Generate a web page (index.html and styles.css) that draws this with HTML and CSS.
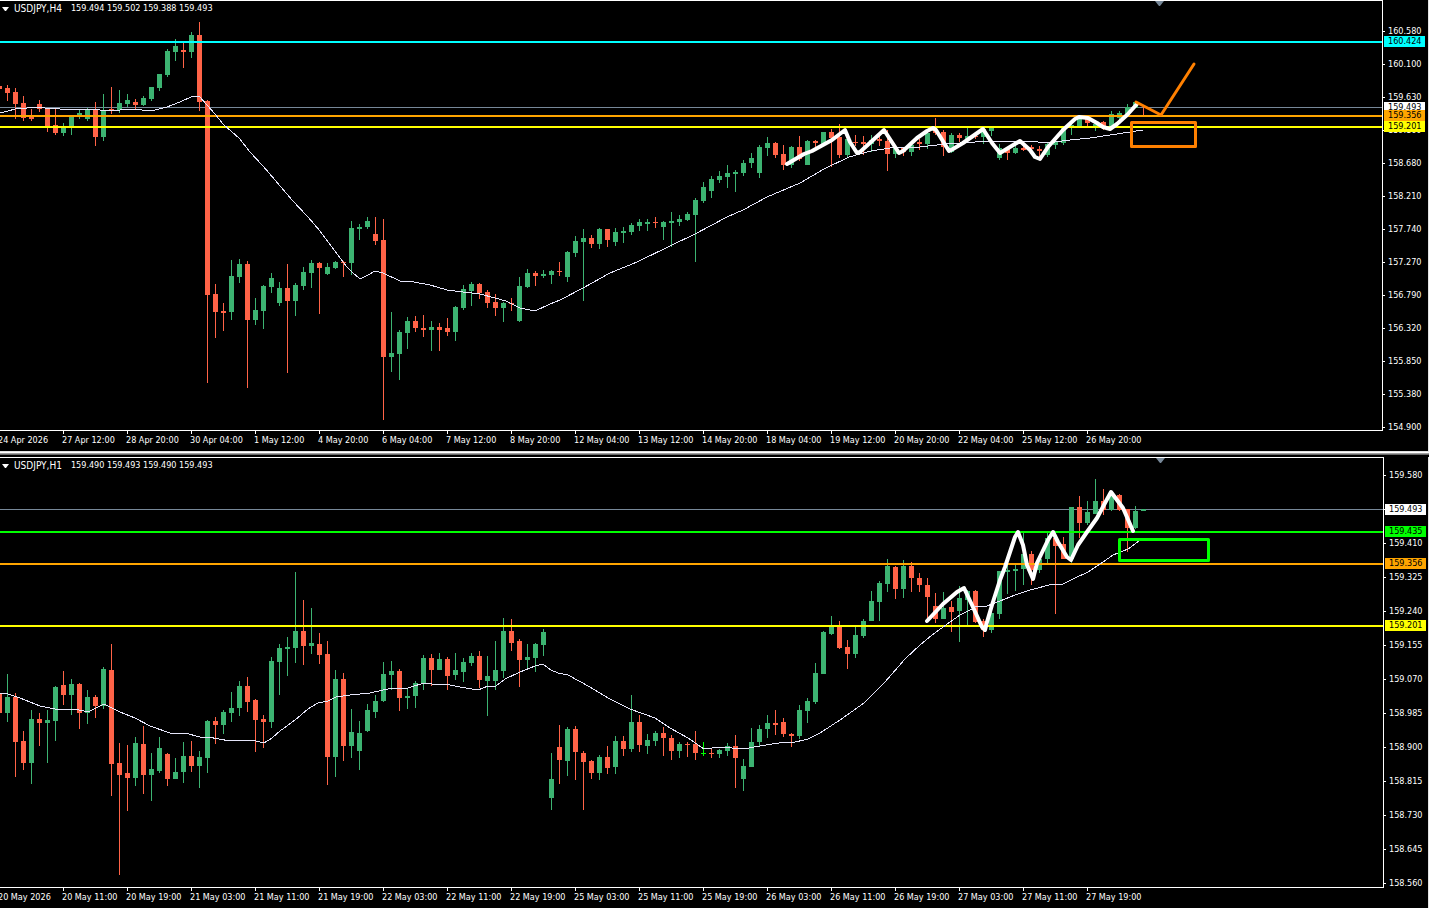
FILE: index.html
```html
<!DOCTYPE html>
<html lang="en">
<head>
<meta charset="utf-8">
<title>USDJPY</title>
<link rel="stylesheet" href="styles.css">
</head>
<body>
<main class="terminal">
  <section class="panel panel-h4" aria-label="USDJPY H4">
    <div class="plot">
      <h2 class="caption"><svg class="caret" width="7" height="4" aria-hidden="true"><path d="M0 0H7L4 4H3Z"/></svg><span class="symbol">USDJPY,H4</span><span class="quote">159.494 159.502 159.388 159.493</span></h2>
      <svg class="chart" role="img" aria-label="Four-hour candles">
        <rect class="bid" y="106" width="100%" height="1"/>
        <g transform="translate(0 -1)"><g class="candles" data-set="h4"></g></g>
        <rect class="cyan" y="40" width="100%" height="2"/>
        <rect class="amber" y="114" width="100%" height="2"/>
        <rect class="yellow" y="125" width="100%" height="2"/>
        <g transform="translate(0 -1)">
          <polyline class="average" points="0,113 8,111 15,109 27,108 38,107 45,108 60,109 90,109 100,110 120,110 132,109 142,110 155,110 167,107 180,102 191,97 199,96 207,105 215,114 223,124 232,132 239,138 250,152 263,166 275,180 292,200 308,217 320,231 335,251 347,267 352,272 360,279 368,275 375,271 383,273 400,281 414,282 430,285 447,290 463,292 480,294 495,298 506,301 520,308 535,311 550,304 560,300 583,288 610,273 637,262 670,246 695,234 727,217 743,210 767,197 800,183 824,169 849,157 871,151 890,148 920,147 945,144 960,143 990,141 1010,141 1038,142 1055,142 1070,140 1090,138 1110,135 1130,132 1143,130"/>
          <polyline class="swing" points="787,164 804,154 812,151 832,140 845,130 850,142 857,153 860,152 884,130 899,153 903,151 917,138 927,131 933,128 936,130 949,151 953,149 963,143 983,129 992,143 1000,153 1020,141 1030,150 1035,157 1040,159 1048,147 1063,130 1075,119 1079,117 1088,118 1097,123 1103,127 1110,129 1117,124 1127,115 1137,104"/>
          <polyline class="forecast" points="1136,102 1161,115 1194,64"/>
          <rect class="zone zone-orange" x="1131.5" y="122.5" width="64" height="24"/>
          <path class="shift" d="M1155 1H1164L1160 6H1159Z"/>
        </g>
      </svg>
    </div>
    <div class="scale">
      <ol class="prices">
        <li>160.580</li><li>160.100</li><li>159.630</li><li>159.160</li><li>158.680</li><li>158.210</li><li>157.740</li><li>157.270</li><li>156.790</li><li>156.320</li><li>155.850</li><li>155.380</li><li>154.900</li>
      </ol>
      <span class="tag tag-white" style="top:102px">159.493</span>
      <span class="tag tag-cyan" style="top:36px">160.424</span>
      <span class="tag tag-amber" style="top:110px">159.356</span>
      <span class="tag tag-yellow" style="top:121px">159.201</span>
    </div>
    <ol class="times">
      <li>24 Apr 2026</li><li>27 Apr 12:00</li><li>28 Apr 20:00</li><li>30 Apr 04:00</li><li>1 May 12:00</li><li>4 May 20:00</li><li>6 May 04:00</li><li>7 May 12:00</li><li>8 May 20:00</li><li>12 May 04:00</li><li>13 May 12:00</li><li>14 May 20:00</li><li>18 May 04:00</li><li>19 May 12:00</li><li>20 May 20:00</li><li>22 May 04:00</li><li>25 May 12:00</li><li>26 May 20:00</li>
    </ol>
  </section>

  <div class="splitter" role="separator"></div>

  <section class="panel panel-h1" aria-label="USDJPY H1">
    <div class="plot">
      <h2 class="caption"><svg class="caret" width="7" height="4" aria-hidden="true"><path d="M0 0H7L4 4H3Z"/></svg><span class="symbol">USDJPY,H1</span><span class="quote">159.490 159.493 159.490 159.493</span></h2>
      <svg class="chart" role="img" aria-label="One-hour candles">
        <rect class="bid" y="51" width="100%" height="1"/>
        <g transform="translate(0 -458)"><g class="candles" data-set="h1"></g></g>
        <rect class="lime" y="73" width="100%" height="2"/>
        <rect class="amber" y="105" width="100%" height="2"/>
        <rect class="yellow" y="167" width="100%" height="2"/>
        <g transform="translate(0 -458)">
          <polyline class="average" points="0,693 8,694 20,698 40,706 55,709 75,709 88,712 104,704 120,712 135,718 150,726 170,733 185,733 200,737 208,737 230,741 252,740 264,743 272,738 280,731 295,720 308,709 318,703 328,701 336,697 350,695 370,693 392,688 408,688 424,683 432,684 445,684 460,687 478,690 488,686 496,686 505,679 520,672 535,666 543,664 551,670 558,673 568,675 590,687 608,698 630,709 655,718 670,728 688,738 704,749 720,747 743,749 760,746 785,742 791,743 808,739 820,733 840,720 864,703 885,682 905,659 920,645 932,635 950,622 960,615 970,610 977,606 987,606 1000,601 1015,595 1030,590 1053,584 1063,584 1075,578 1088,572 1103,562 1113,555 1128,549 1139,541"/>
          <polyline class="swing" points="927,621 943,604 957,592 964,588 972,605 982,627 985,630 987,622 992,605 1000,580 1005,567 1015,537 1018,532 1023,545 1027,565 1033,579 1037,563 1048,540 1053,532 1058,542 1067,557 1071,560 1078,545 1087,532 1097,518 1105,503 1111,492 1123,508 1133,531"/>
          <rect class="zone zone-lime" x="1119.5" y="539.5" width="89" height="21"/>
          <path class="shift" d="M1156 458H1165L1161 463H1160Z"/>
        </g>
      </svg>
    </div>
    <div class="scale">
      <ol class="prices">
        <li>159.580</li><li>159.495</li><li>159.410</li><li>159.325</li><li>159.240</li><li>159.155</li><li>159.070</li><li>158.985</li><li>158.900</li><li>158.815</li><li>158.730</li><li>158.645</li><li>158.560</li>
      </ol>
      <span class="tag tag-white" style="top:47px">159.493</span>
      <span class="tag tag-lime" style="top:69px">159.435</span>
      <span class="tag tag-amber" style="top:101px">159.356</span>
      <span class="tag tag-yellow" style="top:163px">159.201</span>
    </div>
    <ol class="times">
      <li>20 May 2026</li><li>20 May 11:00</li><li>20 May 19:00</li><li>21 May 03:00</li><li>21 May 11:00</li><li>21 May 19:00</li><li>22 May 03:00</li><li>22 May 11:00</li><li>22 May 19:00</li><li>25 May 03:00</li><li>25 May 11:00</li><li>25 May 19:00</li><li>26 May 03:00</li><li>26 May 11:00</li><li>26 May 19:00</li><li>27 May 03:00</li><li>27 May 11:00</li><li>27 May 19:00</li>
    </ol>
  </section>
</main>
<script src="chart.js"></script>
</body>
</html>
```
FILE: styles.css
```css
* {
  box-sizing: border-box;
}

body {
  margin: 0;
  background: #000;
  color: #fff;
  font-family: "DejaVu Sans Condensed", "DejaVu Sans", sans-serif;
  font-size: 9px;
  line-height: 11px;
}

.terminal {
  display: flex;
  flex-direction: column;
  min-height: 100vh;
  border-right: 1px solid #fff;
}

.panel {
  display: grid;
  grid-template-columns: minmax(0, 1fr) 45px;
  grid-template-rows: auto 20px;
  border-right: 1px solid #e3e3e3;
}

.panel-h1 {
  grid-template-columns: minmax(0, 1fr) 44px;
  margin-top: 2px;
}

.plot {
  position: relative;
  border: 1px solid #fff;
  border-left: 0;
}

.chart {
  display: block;
  width: 100%;
  height: 429px;
  overflow: hidden;
}

.caption {
  position: absolute;
  top: 2px;
  left: 2px;
  display: flex;
  align-items: center;
  margin: 0;
  font-size: 9px;
  font-weight: 400;
  white-space: nowrap;
}

.caret {
  margin-right: 5px;
  fill: #fff;
}

.symbol {
  margin-right: 9px;
  font-size: 10px;
}

.bid,
.shift {
  fill: #778899;
}

.cyan {
  fill: #00ffff;
}

.amber {
  fill: #ffa500;
}

.yellow {
  fill: #ffff00;
}

.lime {
  fill: #00ff00;
}

.candles {
  shape-rendering: crispEdges;
}

.bull {
  fill: #3cb371;
}

.bear {
  fill: #ff6347;
}

.doji {
  fill: #00ff00;
}

.average {
  fill: none;
  stroke: #e6e6fa;
  stroke-width: 1;
  shape-rendering: crispEdges;
}

.swing {
  fill: none;
  stroke: #fff;
  stroke-width: 4;
  stroke-linecap: round;
  stroke-linejoin: round;
}

.forecast {
  fill: none;
  stroke: #ff8000;
  stroke-width: 3;
  stroke-linecap: round;
  stroke-linejoin: round;
}

.zone {
  fill: none;
  stroke-width: 3;
  stroke-linejoin: round;
}

.zone-orange {
  stroke: #ff8000;
}

.zone-lime {
  stroke: #00ff00;
}

.scale {
  position: relative;
  grid-column: 2;
  grid-row: 1 / 3;
}

.prices,
.times {
  margin: 0;
  padding: 0;
  list-style: none;
}

.prices {
  padding-top: 15px;
}

.panel-h1 .prices {
  padding-top: 1px;
}

.prices li {
  display: flex;
  align-items: center;
  gap: 3px;
  height: 33px;
}

.panel-h1 .prices li {
  height: 34px;
}

.prices li::before {
  width: 2px;
  height: 1px;
  background: #fff;
  content: "";
}

.tag {
  position: absolute;
  left: 1px;
  width: 41px;
  padding-left: 4px;
  color: #000;
}

.tag-white {
  background: #fff;
}

.tag-cyan {
  background: #00ffff;
}

.tag-amber {
  background: #ffa500;
}

.tag-yellow {
  background: #ffff00;
}

.tag-lime {
  background: #00ff00;
}

.times {
  display: flex;
  grid-column: 1;
  grid-row: 2;
  margin-left: -2px;
  overflow: hidden;
  white-space: nowrap;
}

.times li {
  flex: 0 0 64px;
}

.times li::before {
  display: block;
  width: 1px;
  height: 3px;
  margin: 0 0 1px 1px;
  background: #fff;
  content: "";
}

.splitter {
  height: 4px;
  border-top: 1px solid #e3e3e3;
  border-bottom: 1px solid #696969;
  background: linear-gradient(#fff 50%, #a0a0a0 50%);
}
```
FILE: chart.js
```js
// Each candle: high, body top, body bottom, low, direction (g up, r down, l flat).
const sets = {
  h4: `86 86 89 89 r|85 88 93 101 r|88 92 104 119 r|96 103 118 121 r|109 117 119 121 r|100 104 109 112 r|108 109 127 132 r|108 125 133 135 r|123 127 133 136 g|116 117 127 135 g|110 113 116 119 g|108 109 119 121 g|102 109 137 146 r|94 110 137 141 g|87 109 110 114 r|90 103 110 113 g|94 100 104 107 g|99 102 105 109 r|96 98 105 106 g|87 87 99 101 g|74 74 88 91 g|49 51 75 77 g|39 46 52 61 g|43 50 52 68 r|32 35 52 58 g|22 35 102 111 r|100 101 295 383 r|284 294 312 338 r|303 311 313 331 r|260 276 312 320 g|259 264 277 283 g|261 264 320 388 r|298 310 320 325 g|285 286 311 329 g|273 278 287 293 g|282 288 303 306 g|264 288 301 373 r|283 285 301 316 g|267 272 286 290 g|260 263 273 288 g|262 263 268 314 r|263 267 274 275 g|261 262 268 269 g|261 262 263 277 r|221 228 263 275 g|224 227 229 240 g|217 221 227 229 g|217 234 241 245 r|219 240 357 420 r|312 353 357 372 g|330 332 354 380 g|317 321 333 349 g|316 321 328 332 r|315 328 330 337 r|321 327 330 351 g|323 327 330 351 r|318 328 332 336 r|306 307 332 341 g|285 289 308 310 g|282 284 291 306 g|283 284 293 299 r|290 292 303 308 r|294 302 308 316 r|302 303 308 322 g|298 303 304 311 r|277 286 321 322 g|269 273 287 288 g|271 273 276 286 r|270 274 276 278 g|270 271 275 284 g|262 271 272 276 r|251 252 277 282 g|236 241 253 257 g|229 238 242 301 g|235 238 244 248 r|228 229 244 249 g|229 229 240 247 r|228 232 242 246 g|227 231 233 243 g|223 225 232 235 g|219 222 226 231 g|219 222 224 231 g|217 222 223 228 r|221 222 227 240 g|212 221 223 247 g|215 219 222 226 g|212 214 220 221 g|198 200 215 262 g|182 187 201 203 g|176 179 191 198 g|171 176 180 183 g|165 173 177 188 g|170 172 174 192 g|160 163 173 176 g|153 158 163 168 g|145 147 173 178 g|137 143 148 156 g|142 143 155 158 r|145 154 165 170 r|146 147 165 168 g|136 147 159 161 r|140 141 165 165 g|140 141 143 147 r|132 132 144 144 g|129 132 138 167 r|124 137 155 158 r|138 139 155 158 g|135 142 143 146 r|136 142 144 155 r|135 140 144 152 g|136 139 141 146 r|130 141 154 171 r|147 148 154 158 g|147 148 152 156 r|144 145 152 156 g|139 142 144 150 r|131 133 144 149 g|118 130 133 135 r|130 132 147 156 r|133 135 152 153 g|133 135 138 142 r|126 136 139 142 g|134 136 137 139 r|128 129 137 144 g|126 128 131 136 g|144 148 158 160 g|147 149 153 160 r|143 148 153 154 g|146 148 150 151 r|145 147 149 152 r|146 149 151 156 r|143 144 155 157 g|140 141 145 149 g|126 128 143 145 g|122 125 127 135 g|116 117 126 126 g|117 119 123 126 r|120 124 126 131 g|121 122 128 130 r|111 114 128 128 g|111 113 118 120 g|104 107 115 115 g|101 102 108 108 g|107 107 107 115 r`,
  h1: `694 694 713 713 r|674 697 713 722 g|693 697 742 777 r|731 741 763 770 r|710 719 763 784 g|713 719 723 746 r|710 720 723 763 g|686 687 721 741 g|671 685 695 705 r|679 684 695 715 g|683 684 713 729 r|690 697 713 724 g|695 697 706 718 r|667 669 706 709 g|644 670 764 796 r|743 763 775 875 r|745 773 778 811 r|737 743 778 786 g|726 744 775 794 r|753 769 775 801 g|737 748 771 773 g|753 754 779 786 r|758 772 779 779 g|742 756 772 783 g|741 756 766 772 r|751 757 766 788 g|720 721 758 773 g|717 721 725 744 r|710 712 725 734 g|692 708 713 722 g|681 686 708 716 g|677 686 702 712 r|699 700 720 752 r|715 719 722 748 r|657 661 722 728 g|644 648 662 695 g|637 647 649 676 g|572 631 648 663 g|600 631 646 665 r|608 643 646 654 g|633 644 655 664 r|641 654 757 785 r|670 679 757 777 g|673 679 746 761 r|709 732 746 758 g|721 733 751 770 g|704 710 731 732 g|695 701 712 718 g|662 674 701 702 g|661 671 675 690 g|669 671 698 711 r|689 696 698 709 g|681 683 696 708 g|655 658 684 690 g|654 658 670 686 r|653 659 670 670 g|657 659 676 690 r|653 670 675 680 g|658 662 672 682 g|653 656 663 666 g|651 656 680 688 r|656 676 681 716 g|641 670 681 690 g|618 631 671 678 g|619 631 643 651 r|639 641 660 687 r|644 657 660 670 g|643 644 658 672 g|629 632 645 656 g|753 779 798 810 g|725 747 760 784 r|727 729 761 776 g|726 729 752 780 r|751 753 762 810 r|760 761 773 779 r|755 757 773 780 g|746 757 768 774 r|736 741 767 774 g|736 741 749 756 r|695 722 749 752 g|715 722 745 752 r|734 740 746 754 g|731 733 741 746 g|727 733 738 756 r|735 738 751 760 r|742 744 751 758 g|742 744 745 757 r|731 744 753 760 r|742 753 754 756 l|749 753 754 758 r|749 750 754 758 g|743 746 751 756 g|735 746 758 788 r|759 766 779 791 g|728 742 767 767 g|725 729 742 747 g|715 723 729 738 g|710 723 725 735 r|718 722 734 737 r|733 734 736 747 r|705 710 736 739 g|698 701 711 723 g|663 673 702 704 g|631 632 674 674 g|616 626 634 635 g|621 626 648 649 r|640 647 654 669 r|627 635 654 658 g|619 621 636 638 g|591 601 621 621 g|581 583 602 621 g|559 566 584 592 g|566 567 589 599 r|560 566 589 598 g|562 566 578 592 r|573 578 585 592 r|578 585 597 622 r|593 606 619 623 r|592 608 619 619 g|601 607 612 632 r|586 598 611 642 g|590 591 600 626 g|590 591 622 623 r|619 621 630 637 r|612 613 630 633 g|571 571 614 619 g|565 570 572 594 g|565 569 571 591 g|533 554 569 585 g|551 554 570 585 r|555 559 570 573 g|533 538 559 564 g|535 538 546 614 r|537 544 559 559 r|507 507 559 563 g|496 507 523 538 r|501 512 523 525 g|479 501 514 514 g|489 501 510 515 r|491 495 510 511 g|494 495 510 511 r|509 509 528 552 r|506 511 528 529 g|509 509 511 511 g`
};
const kinds = { g: "bull", r: "bear", l: "doji" };
const NS = "http://www.w3.org/2000/svg";
const STEP = 8;

document.querySelectorAll(".candles").forEach((group) => {
  sets[group.dataset.set].split("|").forEach((row, i) => {
    const [high, top, bottom, low, kind] = row.split(" ");
    const center = i * STEP - 1;
    const path = document.createElementNS(NS, "path");
    path.setAttribute("class", kinds[kind]);
    path.setAttribute(
      "d",
      `M${center} ${high}h1V${low}h-1ZM${center - 2} ${top}h5V${bottom}h-5Z`
    );
    group.append(path);
  });
});
```
